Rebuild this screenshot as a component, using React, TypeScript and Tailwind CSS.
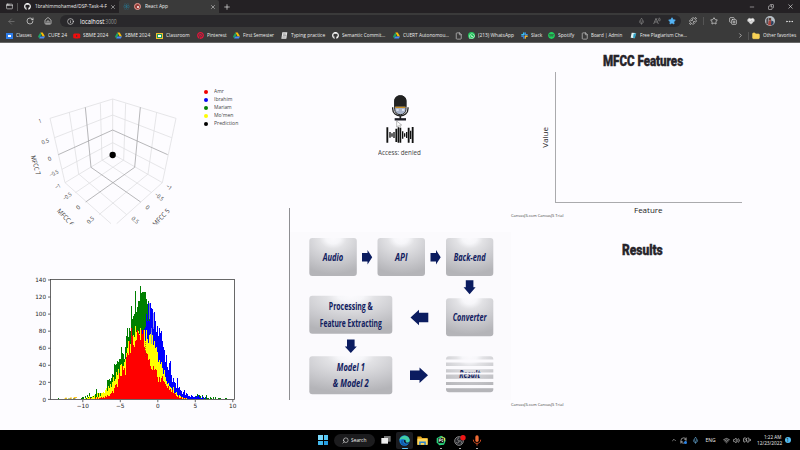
import React, { useLayoutEffect, useRef, useState } from "react";
import { ArrowLeft, RotateCw, House, Info, Mic, Star, Puzzle, CopyPlus, HeartPulse, Ellipsis, X, Plus, Minus, Copy, ChevronRight, ChevronUp, Search, Wifi, Volume2, BatteryCharging, RefreshCw, File, Folder, AppWindow } from "lucide-react";
import { FaGithub, FaWhatsapp, FaSpotify, FaPinterest, FaYoutube, FaReact } from "react-icons/fa";

// One line of text condensed or stretched to an exact width.
function Fit({ w, children, className = "" }: { w: number; children: React.ReactNode; className?: string }) {
  const ref = useRef<HTMLSpanElement>(null);
  const [scale, setScale] = useState(1);
  useLayoutEffect(() => {
    if (ref.current) setScale(w / ref.current.offsetWidth);
  }, [w]);
  return (
    <span className={`block shrink-0 whitespace-nowrap ${className}`} style={{ width: w }}>
      <span ref={ref} className="inline-block origin-left" style={{ transform: `scaleX(${scale})` }}>
        {children}
      </span>
    </span>
  );
}

const Drive = () => (
  <svg viewBox="0 0 24 22" className="h-[7px] w-[7px]">
    <path d="M8 1h8l8 13h-8z" fill="#fbbc04" />
    <path d="M8 1l4 7-8 13-4-7z" fill="#1ea362" />
    <path d="M8 14h16l-4 7H4z" fill="#4688f4" />
  </svg>
);

const SlackMark = () => (
  <svg viewBox="0 0 24 24" className="h-[7px] w-[7px]" strokeWidth="5" strokeLinecap="round">
    <path d="M3 9.500h6M9.500 3v6" stroke="#36c5f0" />
    <path d="M14.500 3v6M15 9.500h6" stroke="#3f8fe0" />
    <path d="M14.500 15v6M15 14.500h6" stroke="#ecb22e" />
    <path d="M3 14.500h6M9.500 15v6" stroke="#3c7fd6" />
  </svg>
);

const bookmarks: { w: number; tw: number; label: string; icon: React.ReactNode }[] = [
  { w: 32, tw: 16, label: "Classes", icon: <span className="flex h-[6px] w-[7px] items-center justify-center bg-[#2f7de8]"><span className="h-[2px] w-[3px] bg-white" /></span> },
  { w: 35, tw: 19, label: "CUFE 24", icon: <Drive /> },
  { w: 42, tw: 25, label: "SBME 2024", icon: <FaYoutube size={8} color="#f00c0c" /> },
  { w: 41, tw: 25, label: "SBME 2024", icon: <Drive /> },
  { w: 41, tw: 24, label: "Classroom", icon: <span className="flex h-[6px] w-[7px] items-center justify-center border border-[#f2bb2d] bg-[#1b9d5c]"><span className="h-[2px] w-[3px] bg-white" /></span> },
  { w: 36, tw: 19.5, label: "Pinterest", icon: <FaPinterest size={7} color="#e6143b" /> },
  { w: 48, tw: 31, label: "First Semester", icon: <Drive /> },
  { w: 51, tw: 34, label: "Typing practice", icon: <svg viewBox="0 0 21 21" className="h-[7px] w-[7px]"><path d="M4 1h15l-3 19H1z" fill="#e4e4e4" /><path d="M6 6h8M6 10h10M4 15h10" stroke="#777" strokeWidth="2" /></svg> },
  { w: 61, tw: 43, label: "Semantic Commit...", icon: <FaGithub size={7} color="#fff" /> },
  { w: 62, tw: 46, label: "CUERT Autonomou...", icon: <Drive /> },
  { w: 13, tw: 0, label: "", icon: <File size={8} color="#d5d5d5" /> },
  { w: 53, tw: 36, label: "(213) WhatsApp", icon: <span className="flex h-[7px] w-[7px] items-center justify-center rounded-sm bg-[#23c35c]"><FaWhatsapp size={6} color="#fff" /></span> },
  { w: 27, tw: 11, label: "Slack", icon: <SlackMark /> },
  { w: 33, tw: 16, label: "Spotify", icon: <FaSpotify size={7} color="#1ed05c" /> },
  { w: 49, tw: 31.5, label: "Board | Admin", icon: <File size={8} color="#d5d5d5" /> },
  { w: 60, tw: 47, label: "Free Plagiarism Che...", icon: <svg viewBox="0 0 21 21" className="h-[7px] w-[7px]"><path d="M5 2l12 1-3 16-12-2z" fill="#dff3f5" /><path d="M11 5l8-1-4 14-6-1z" fill="#2d9fc2" /></svg> },
];

function Browser() {
  return (
    <header className="flex h-[43px] shrink-0 flex-col border-b border-[#686868] bg-[#3a3a3a] text-[#ececec]">
      <div className="flex h-[13px] items-center bg-[#242124]">
        <AppWindow size={7} className="ml-[6px]" />
        <span className="ml-[4px] h-[8px] w-px bg-[#555]" />
        <FaGithub size={7} className="ml-[6px] text-white" />
        <Fit w={72} className="ml-[4px] text-[6px] leading-[9px]">1brahimmohamed/DSP-Task-4-F</Fit>
        <X size={6} className="ml-[3px]" />
        <div className="ml-[3px] flex h-[13px] w-[100px] items-center rounded-t-[2px] bg-[#3a3a3a]">
          <FaReact size={7} className="ml-[4px] text-[#28738c]" />
          <span className="ml-[4px] flex h-[7px] w-[7px] items-center justify-center rounded-full border border-[#e99d94] bg-[#943b37]"><span className="h-[2px] w-[2px] rounded-full bg-white" /></span>
          <Fit w={23} className="ml-[4px] text-[6px] leading-[9px]">React App</Fit>
          <X size={6} className="ml-auto mr-[3px]" />
        </div>
        <Plus size={8} className="ml-[4px]" />
        <Minus size={6} className="ml-auto" />
        <Copy size={6} className="ml-[13px] -scale-x-100" />
        <X size={7} className="ml-[13px] mr-[6px]" />
      </div>
      <div className="flex h-[16px] items-center">
        <ArrowLeft size={9} className="ml-[7px] text-[#777]" />
        <RotateCw size={8} className="ml-[10px]" />
        <House size={8} className="ml-[10px]" />
        <div className="ml-[8px] flex h-[12px] w-[621px] items-center rounded-full bg-[#29282b]">
          <Info size={7} className="ml-[7px]" />
          <Fit w={24} className="ml-[6px] text-[6.5px] leading-[9px] text-white">localhost</Fit>
          <Fit w={13} className="text-[6.5px] leading-[9px] text-[#929292]">:3000</Fit>
          <Mic size={7} className="ml-auto text-[#8b8b8b]" />
          <svg viewBox="0 0 24 24" className="ml-[8px] h-[8px] w-[8px]" fill="none" stroke="#999" strokeWidth="2"><path d="M2 21L9 4l7 17M5 15h8M15 4q3 3 1 7M19 2q4 5 1 11" /></svg>
          <Star size={8} fill="#55b4f5" className="ml-[7px] mr-[5px] text-[#55b4f5]" />
        </div>
        <Puzzle size={8} className="ml-[8px]" />
        <span className="ml-[6px] h-[8px] w-px bg-[#555]" />
        <Star size={8} className="ml-[6px]" />
        <CopyPlus size={8} className="ml-[11px]" />
        <HeartPulse size={8} fill="#eee" stroke="#bbb" className="ml-[10px]" />
        <svg viewBox="0 0 30 30" className="ml-[10px] h-[10px] w-[10px]"><circle cx="15" cy="15" r="15" fill="#b7c0c7" /><path d="M4 25V9l6-5v21z" fill="#534b50" /><path d="M9 28l2-14 6-3 4 17z" fill="#a7423b" /><path d="M18 28l1-15 7 4-1 8z" fill="#293f5c" /><circle cx="15" cy="9" r="4" fill="#5b4037" /></svg>
        <Ellipsis size={9} className="ml-[10px]" />
      </div>
      <div className="flex h-[13px] items-center pl-[6px]">
        {bookmarks.map((b, i) => (
          <div key={i} className="flex shrink-0 items-center" style={{ width: b.w }}>
            <span className="mr-[2.5px] flex w-[7.5px] shrink-0 justify-center">{b.icon}</span>
            {b.label && <Fit w={b.tw} className="text-[6px] leading-[9px]">{b.label}</Fit>}
          </div>
        ))}
        <ChevronRight size={7} className="ml-auto" />
        <span className="ml-[4px] h-[8px] w-px bg-[#555]" />
        <Folder size={8} fill="#f8d156" stroke="#f8d156" className="ml-[3px]" />
        <Fit w={33} className="ml-[3px] mr-[4px] text-[6px] leading-[9px]">Other favorites</Fit>
      </div>
    </header>
  );
}

const lightGrid = [
  "M90 115L278 57L468 115", "M104 173L278 105L455 173", "M126 268L278 188L433 268", "M135 308L278 222L427 308",
  "M90 115L135 308L273 431", "M468 115L427 308L290 431", "M148 97L176 282L320 404", "M410 97L384 282L237 404",
  "M241 70L246 240L395 338", "M317 70L311 240L166 338", "M278 57V222",
];
const darkGrid = ["M115 224L278 150L443 224", "M196 82L213 262L362 366", "M361 82L344 262L197 366"];
const ticks3d: [string, number, number, number, number][] = [
  ["1", 60, 124, -18, 7], ["0.5", 76, 185, -18, 23], ["0", 89, 237, -22, 10], ["−0.5", 102, 281, -25, 28], ["−1", 114, 320, -28, 17],
  ["−0.5", 142, 350, -38, 28], ["0", 175, 383, -42, 10], ["0.5", 212, 421, -42, 23],
  ["−1", 446, 322, 38, 17], ["−0.5", 417, 351, 40, 28], ["0", 382, 383, 42, 10], ["0.5", 345, 421, 42, 23],
];

function Scatter3D() {
  return (
    <svg viewBox="0 0 540 420" className="h-[140px] w-[180px] shrink-0">
      <defs><clipPath id="scene"><rect x="0" y="0" width="540" height="412" /></clipPath></defs>
      <g clipPath="url(#scene)">
        <g transform="translate(0 -21)" fontFamily="Open Sans, sans-serif" fill="#333">
          {lightGrid.map((d) => <path key={d} d={d} fill="none" stroke="#e0e0e2" strokeWidth="2.4" />)}
          {darkGrid.map((d) => <path key={d} d={d} fill="none" stroke="#a5a5a7" strokeWidth="2.4" />)}
          <circle cx="278" cy="225" r="9.5" fill="#000" />
          {ticks3d.map(([t, x, y, r, w], i) => (
            <text key={i} x={x} y={y + 5} fontSize="17" textAnchor="middle" textLength={w} lengthAdjust="spacingAndGlyphs" transform={`rotate(${r} ${x} ${y})`}>{t}</text>
          ))}
          <text x="46" y="262" fontSize="20" textAnchor="middle" textLength="60" lengthAdjust="spacingAndGlyphs" transform="rotate(74 46 256)">MFCC 7</text>
          <text x="136" y="419" fontSize="20" textAnchor="middle" textLength="64" lengthAdjust="spacingAndGlyphs" transform="rotate(47 136 413)">MFCC 6</text>
          <text x="424" y="419" fontSize="20" textAnchor="middle" textLength="64" lengthAdjust="spacingAndGlyphs" transform="rotate(-47 424 413)">MFCC 5</text>
        </g>
      </g>
    </svg>
  );
}

const legend: [string, string, number][] = [
  ["Amr", "bg-[#f00000]", 10], ["Ibrahim", "bg-[#0808f0]", 18.5], ["Mariam", "bg-[#068006]", 18], ["Mo'men", "bg-[#fcfc05]", 19.5], ["Prediction", "bg-black", 24],
];

// Bin counts; each series starts at `from` and every bin is one unit wide.
const series = [
  { color: "#008000", from: 81, v: [2, 3, 3, 1, 4, 2, 5, 3, 8, 3, 3, 2, 4, 3, 6, 12, 8, 7, 6, 8, 7, 7, 9, 8, 10, 14, 23, 23, 24, 22, 25, 30, 29, 41, 40, 42, 45, 44, 47, 48, 62, 54, 53, 48, 62, 74, 84, 73, 84, 80, 109, 94, 98, 100, 127, 103, 108, 116, 115, 133, 125, 126, 126, 126, 126, 118, 112, 115, 112, 110, 95, 80, 62, 50, 42, 37, 34, 32, 28, 24, 22, 20, 18, 16, 14, 13, 12, 11, 9, 8, 7, 6, 6, 8, 5, 4, 3, 3, 3, 2, 2, 3, 2, 2, 3, 1, 2, 3, 4, 2, 3, 2, 3, 2, 3, 4, 6, 3, 5, 4, 2, 5, 3, 2, 3, 5, 2, 2, 0, 3, 2, 1, 3, 1, 3, 1, 0, 2, 2, 2, 1, 1, 1, 0, 2, 2] },
  { color: "#0000ff", from: 128, v: [18, 22, 27, 31, 35, 40, 47, 45, 55, 60, 58, 67, 74, 79, 82, 82, 83, 85, 100, 92, 113, 92, 113, 107, 106, 85, 103, 92, 79, 86, 74, 84, 78, 80, 68, 61, 58, 44, 52, 38, 35, 43, 45, 29, 21, 25, 20, 19, 13, 25, 14, 15, 11, 10, 6, 9, 11, 5, 7, 6, 4, 4, 3, 5, 4, 3, 3, 4, 3, 4, 5, 3, 2, 2, 4, 2, 1, 3, 1, 1] },
  { color: "#ffff00", from: 84, v: [1, 2, 1, 3, 2, 4, 1, 2, 4, 3, 5, 2, 3, 7, 3, 8, 4, 8, 7, 9, 8, 11, 13, 10, 16, 14, 18, 15, 20, 26, 22, 24, 32, 29, 36, 30, 40, 41, 35, 39, 44, 48, 55, 60, 68, 66, 65, 75, 70, 76, 73, 86, 79, 82, 80, 77, 84, 82, 72, 80, 82, 69, 81, 71, 66, 76, 77, 79, 75, 64, 69, 60, 62, 56, 44, 46, 42, 44, 37, 30, 34, 26, 22, 18, 19, 16, 15, 13, 11, 15, 8, 8, 9, 5, 4, 5, 4, 3, 3, 2, 2, 1, 2] },
  { color: "#ff0000", from: 88, v: [1, 1, 2, 1, 0, 1, 1, 2, 1, 3, 1, 2, 2, 3, 2, 3, 2, 4, 3, 5, 4, 4, 6, 8, 10, 8, 13, 17, 18, 15, 24, 31, 27, 28, 39, 34, 37, 29, 50, 54, 52, 68, 55, 84, 74, 64, 62, 68, 70, 81, 78, 76, 70, 81, 77, 81, 62, 57, 54, 53, 46, 48, 39, 36, 35, 39, 34, 36, 34, 26, 20, 26, 20, 25, 27, 22, 20, 18, 16, 14, 16, 11, 12, 9, 11, 7, 8, 6, 4, 3, 4, 2, 2, 3, 1, 2, 1, 2, 1, 1, 1] },
];

function Histogram() {
  const py = (v: number) => 399.4 - v * 0.853;
  return (
    <svg viewBox="20 272 220 140" className="h-[140px] w-[220px] shrink-0" fontFamily="DejaVu Sans, sans-serif" fill="#222" fontSize="5.8">
      <rect x="50.5" y="279.5" width="184" height="120" fill="#fff" />
      <path d="M58.5 399v-1M66 399v-.7M69 399v-.7M73.5 399v-.7" stroke="#008000" />
      <path d="M65 399v-.8h2M70 399v-1h2M74 399v-1.5h3" stroke="#ffc61a" />
      {series.map((s) => (
        <path key={s.color} fill={s.color} shapeRendering="crispEdges" d={`M${s.from} 399.4${s.v.map((v, i) => `V${py(v).toFixed(1)}H${s.from + i + 1}`).join("")}V399.4Z`} />
      ))}
      <path d="M149.5 303V319M153.5 313V329M151.5 328V344" stroke="#8c87d6" strokeWidth=".8" />
      <path d="M131.5 330V347M145.5 342V358" stroke="#9a3310" strokeWidth=".7" strokeDasharray="1 1" />
      <rect x="50.5" y="279.5" width="184" height="120" fill="none" stroke="#444" strokeWidth=".8" />
      {[0, 20, 40, 60, 80, 100, 120, 140].map((t) => (
        <g key={t}>
          <path d={`M48 ${py(t)}h2.5`} stroke="#444" strokeWidth=".8" />
          <text x="46" y={py(t) + 2.2} textAnchor="end" textLength={String(t).length * 3.6} lengthAdjust="spacingAndGlyphs">{t}</text>
        </g>
      ))}
      {[-10, -5, 0, 5, 10].map((t) => (
        <g key={t}>
          <path d={`M${157.8 + t * 7.5} 400v2.2`} stroke="#444" strokeWidth=".8" />
          <text x={157.8 + t * 7.5} y="408.1" textAnchor="middle">{String(t).replace("-", "−")}</text>
        </g>
      ))}
    </svg>
  );
}

function Recorder() {
  return (
    <div className="flex h-[164px] flex-col items-center pt-[51px] pr-px">
      <svg viewBox="75 40 90 150" className="h-[50px] w-[30px]">
        <path d="M98 80v4c0 29 46 29 46 0v-4" fill="none" stroke="#222" strokeWidth="4" />
        <rect x="104" y="45" width="34" height="57" rx="16" fill="#a9b4cb" stroke="#222" strokeWidth="3" />
        <path d="M103 78V60c0-21 36-21 36 0v18z" fill="#222" />
        <path d="M106 80h30" stroke="#c78d22" strokeWidth="4" />
        <path d="M109 88h7M126 88h7" stroke="#e8edf8" strokeWidth="4" />
        <path d="M121 105v10" stroke="#222" strokeWidth="5" />
        <path d="M104 116h34" stroke="#1b1b24" strokeWidth="7" />
        <g stroke="#111"><path d="M82 140v46M109 144v40M121 141v45M146 141v45M158 139v48" strokeWidth="5.5" /><path d="M90 154v17M96 158v10M102 154v18M115 140v46M128 152v22M134 158v10M140 154v18M152 150v25" strokeWidth="4" /></g>
        <path d="M110 121v18l5-4 4 7 3-2-3-7h6z" fill="#fff" stroke="#777" strokeWidth="1.5" />
      </svg>
      <Fit w={43} className="mt-[4px] text-[7px] leading-[10px] text-[#444]">Access: denied</Fit>
    </div>
  );
}

function Node({ x, y, w, h, lines, tw, italic = true }: { x: number; y: number; w: number; h: number; lines: string[]; tw: number[]; italic?: boolean }) {
  return (
    <g>
      <rect x={x} y={y} width={w} height={h} rx="3" fill="url(#metal)" />
      {lines.map((t, i) => (
        <text key={t} x={x + w / 2} y={y + h / 2 + 3.7 + (i - (lines.length - 1) / 2) * 16.8} textAnchor="middle" textLength={tw[i]} lengthAdjust="spacingAndGlyphs" fontStyle={italic ? "italic" : "normal"}>{t}</text>
      ))}
    </g>
  );
}

function Pipeline() {
  return (
    <svg viewBox="290 208 221 192" className="h-[192px] w-[221px]" fontFamily="Open Sans, sans-serif" fontWeight="700" fontSize="10.5" fill="#11205f">
      <defs>
        <radialGradient id="metal" cx=".5" cy="0" r=".95"><stop offset="0" stopColor="#fbfafd" /><stop offset=".16" stopColor="#f6f6f9" /><stop offset=".3" stopColor="#e2e2e5" /><stop offset=".65" stopColor="#cbcbcf" /><stop offset="1" stopColor="#b4b4b8" /></radialGradient>
      </defs>
      <rect x="290" y="232" width="221" height="168" fill="#fbfafd" />
      <Node x={309.3} y={238} w={47.5} h={38} lines={["Audio"]} tw={[20.5]} />
      <Node x={377.5} y={238} w={47.5} h={38} lines={["API"]} tw={[12.5]} />
      <Node x={446} y={238} w={47.3} h={38} lines={["Back-end"]} tw={[32]} />
      <Node x={446} y={298.3} w={47.3} h={38} lines={["Converter"]} tw={[34]} />
      <Node x={309.3} y={295.7} w={83} h={38} lines={["Processing &", "Feature Extracting"]} tw={[44, 62]} italic={false} />
      <Node x={309.3} y={356.2} w={83} h={38} lines={["Model 1", "& Model 2"]} tw={[28, 36]} />
      <Node x={446} y={356.2} w={47.3} h={36} lines={["Result"]} tw={[21]} />
      {[[359.5, 3], [366, 3.2], [372.5, 2], [378.8, 3.2], [385, 3.2]].map(([y, h]) => <rect key={y} x="445" y={y} width="49.5" height={h} fill="#fbfafd" />)}
      <g fill="#0b1c60">
        <path d="M362 253h5.500v-3l4.700 7.200-4.700 7.200v-3H362z" />
        <path d="M430.500 253h5.500v-3l4.700 7.200-4.700 7.200v-3h-5.500z" />
        <path d="M465.800 280.300h7.600v7h2.200l-6 7-6-7h2.200z" />
        <path d="M428.300 312.700h-9.300v-3l-8.500 7.800 8.500 7.800v-3h9.300z" />
        <path d="M347 339.500h7.600v7h2.200l-6 6.500-6-6.500h2.200z" />
        <path d="M410 370.500h9.500v-3l8.500 7.800-8.500 7.800v-3H410z" />
      </g>
    </svg>
  );
}

const Credit = () => (
  <div className="flex text-[4px] leading-[6px] text-[#444]"><Fit w={52}>CanvasJS.com CanvasJS Trial</Fit></div>
);

const Title = ({ w, children }: { w: number; children: React.ReactNode }) => (
  <h2 className="flex justify-center font-[Roboto] text-[14px] leading-[17px] font-black text-[#26242a] [-webkit-text-stroke:0.4px_#26242a]"><Fit w={w}>{children}</Fit></h2>
);

function Taskbar() {
  return (
    <footer className="flex h-[20px] shrink-0 items-center bg-black text-[#eee]">
      <div className="ml-[318px] grid h-[10px] w-[10px] grid-cols-2 gap-px">
        <i className="bg-[#79d9fb]" /><i className="bg-[#55c7f5]" /><i className="bg-[#43b9ee]" /><i className="bg-[#249ee3]" />
      </div>
      <div className="ml-[6px] flex h-[13px] w-[41px] items-center rounded-full bg-[#1c1c1e]">
        <Search size={7} className="ml-[8px] -scale-x-100" />
        <Fit w={15} className="ml-[2px] text-[5.5px] leading-[8px]">Search</Fit>
      </div>
      <svg viewBox="0 0 30 30" className="ml-[6px] h-[10px] w-[10px]"><path d="M9 3h20v17H9z" fill="#777" /><path d="M1 9h20v17H1z" fill="#eee" /></svg>
      <div className="ml-[5px] flex h-[17px] w-[17px] flex-col items-center justify-end rounded-[2px] bg-[#1b1c20]">
        <svg viewBox="0 0 30 30" className="h-[11px] w-[11px]"><circle cx="15" cy="15" r="14" fill="#1480d8" /><path d="M1 14C3 0 25-3 29 12c2 10-11 10-11 6 4-6-9-10-17-4z" fill="#41cda5" /><path d="M12 13c-5 6 2 15 13 13-8 6-20 1-20-7 0-4 3-6 7-6z" fill="#1359a8" /><path d="M13 14c5-1 6 2 5 4 0 4 7 4 10 2-3 6-16 4-15-6z" fill="#14181e" /></svg>
        <span className="mt-[2px] h-[1px] w-[6px] rounded-full bg-[#62c4f8]" />
      </div>
      <svg viewBox="0 0 30 30" className="ml-[4px] h-[11px] w-[11px]"><path d="M1 4h10l3 4h15v18H1z" fill="#dfa019" /><path d="M1 10h28v17H1z" fill="#ffd75c" /><path d="M8 27v-7h14v7" fill="none" stroke="#2e83cc" strokeWidth="4" /></svg>
      <div className="ml-[8px] flex h-[17px] w-[10px] flex-col items-center justify-end">
        <svg viewBox="0 0 30 30" className="h-[11px] w-[10px]"><path d="M2 8L15 1l12 6 2 9-5 12-14 1-8-8z" fill="#27d77e" /><path d="M17 2l11 7-3 9-8-8z" fill="#f1e54b" /><path d="M7 7h16v16H7z" fill="#101010" /><path d="M10 19V10h5v5h-5M21 11h-3v7h3" fill="none" stroke="#fff" strokeWidth="2" /></svg>
        <span className="mt-[2px] h-[1px] w-[2px] bg-[#aaa]" />
      </div>
      <div className="ml-[8px] flex h-[17px] w-[12px] flex-col items-center justify-end">
        <svg viewBox="0 0 36 33" className="h-[11px] w-[12px]"><circle cx="15" cy="18" r="13" fill="#24252a" stroke="#999" strokeWidth="2.500" /><path d="M15 18c-6-2-5-9 0-9M15 18c6-3 10 4 6 8M15 18c0 7-7 8-9 3" fill="none" stroke="#999" strokeWidth="2.5" /><circle cx="27" cy="8" r="8" fill="#ef1616" /></svg>
        <span className="mt-[2px] h-[1px] w-[2px] bg-[#aaa]" />
      </div>
      <div className="ml-[6px] flex h-[17px] w-[10px] flex-col items-center justify-end">
        <svg viewBox="0 0 30 33" className="h-[11px] w-[10px]"><rect x="10" y="1" width="10" height="20" rx="5" fill="#ef6b35" /><path d="M4 14c0 15 22 15 22 0M15 25v7" fill="none" stroke="#c94b23" strokeWidth="3" /></svg>
        <span className="mt-[2px] h-[1px] w-[2px] bg-[#aaa]" />
      </div>
      <ChevronUp size={6} className="ml-auto" />
      <span className="relative ml-[3px]"><RefreshCw size={7} /><i className="absolute right-0 bottom-0 h-[3px] w-[3px] rounded-full bg-[#2782e8]" /></span>
      <Mic size={7} className="ml-[5px] text-[#72b9e9]" />
      <Fit w={10} className="ml-[7px] text-[5px] leading-[8px]">ENG</Fit>
      <Wifi size={7} className="ml-[7.500px]" />
      <Volume2 size={7} className="ml-[3px]" />
      <BatteryCharging size={8} className="ml-[2.500px]" />
      <div className="ml-[6px] flex flex-col items-end text-[5.5px] leading-[6.5px]">
        <Fit w={17.5}>1:22 AM</Fit>
        <Fit w={25}>12/23/2022</Fit>
      </div>
      <span className="ml-[3px] mr-[9px] flex h-[6.500px] w-[6.500px] items-center justify-center rounded-full bg-[#55bdf1] text-[5px] leading-none text-black">1</span>
    </footer>
  );
}

export default function App() {
  return (
    <div className="flex h-[450px] w-[800px] flex-col overflow-hidden bg-[#fdfcff] font-['Open_Sans',sans-serif]">
      <Browser />
      <main className="flex h-[387px]">
        <section className="flex w-[289px] flex-col">
          <div className="flex pt-[44px] pl-[20px]">
            <Scatter3D />
            <div className="flex flex-col gap-[1px] pt-[1px] pl-[4px]">
              {legend.map(([name, color, w]) => (
                <div key={name} className="flex h-[7px] items-center">
                  <span className={`h-[4px] w-[4px] rounded-full ${color}`} />
                  <Fit w={w} className="ml-[6px] text-[6px] leading-[7px] text-[#444]">{name}</Fit>
                </div>
              ))}
            </div>
          </div>
          <div className="pt-[45px] pl-[20px]"><Histogram /></div>
        </section>
        <section className="flex w-[222px] flex-col">
          <Recorder />
          <div className="mt-px border-l border-[#8e8e92]"><Pipeline /></div>
        </section>
        <section className="flex w-[289px] flex-col">
          <div className="h-[29px] pt-[10px] pr-[26px]"><Title w={80}>MFCC Features</Title></div>
          <div className="flex h-[131px]">
            <div className="flex w-[44px] items-center justify-end pr-[4px]">
              <span className="mr-[2px] rotate-180 text-[8px] leading-[9px] text-[#222] [writing-mode:vertical-rl]">Value</span>
            </div>
            <div className="w-[187px] border-b border-l border-[#aaaaad]" />
          </div>
          <div className="flex h-[10px] items-end pl-[123px] text-[8px] leading-[7px] text-[#222]"><Fit w={29}>Feature</Fit></div>
          <div className="h-[29px]"><Credit /></div>
          <div className="h-[160px] pr-[26px]"><Title w={41}>Results</Title></div>
          <Credit />
        </section>
      </main>
      <Taskbar />
    </div>
  );
}
